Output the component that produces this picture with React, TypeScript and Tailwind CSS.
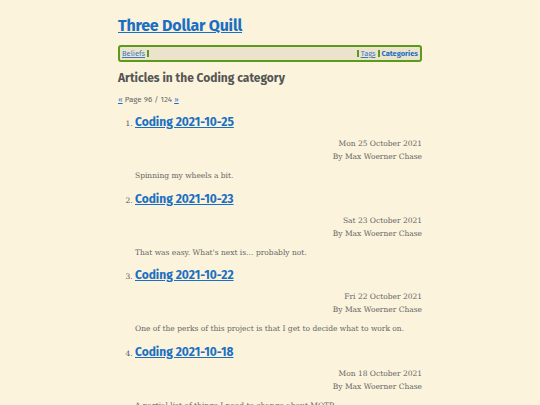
const articles = [
  { title: 'Coding 2021-10-25', date: 'Mon 25 October 2021', summary: 'Spinning my wheels a bit.' },
  { title: 'Coding 2021-10-23', date: 'Sat 23 October 2021', summary: "That was easy. What's next is… probably not." },
  { title: 'Coding 2021-10-22', date: 'Fri 22 October 2021', summary: 'One of the perks of this project is that I get to decide what to work on.' },
  { title: 'Coding 2021-10-18', date: 'Mon 18 October 2021', summary: 'A partial list of things I need to change about MOTR.' },
];

const sans = "font-['Fira_Sans','Noto_Sans','Open_Sans',sans-serif]";

export default function App() {
  return (
    <div className="h-[405px] overflow-hidden bg-[#fbf3dc] font-['DejaVu_Serif','Liberation_Serif',serif] text-[#555]">
      <div className="mx-auto w-[304px] pt-[13px]">
        <h1 className={`${sans} text-[16px] font-bold leading-[25px] tracking-[-0.2px]`}>
          <a href="#" className="text-[#1a6fc2] underline">Three Dollar Quill</a>
        </h1>

        <nav className={`${sans} mt-[7px] flex h-[17px] items-center rounded-[3px] border-2 border-[#5c9a1b] bg-[#ebe3cc] px-[2px] text-[7.5px] leading-none`}>
          <a href="#" className="border-r-2 border-[#5c9a1b] pr-[2px] text-[#3a7bbf] underline">Beliefs</a>
          <div className="flex-1" />
          <a href="#" className="border-x-2 border-[#5c9a1b] px-[2px] text-[#3a7bbf] underline">Tags</a>
          <a href="#" className="pl-[2px] font-bold text-[#1a6fc2]">Categories</a>
        </nav>

        <h2 className={`${sans} mt-[8px] text-[12px] font-bold leading-[16px] text-[#555]`}>
          Articles in the Coding category
        </h2>

        <p className={`${sans} mt-[9px] text-[8px] leading-[10px] text-[#666]`}>
          <a href="#" className="text-[#1a6fc2] underline">«</a> Page 96 / 124{' '}
          <a href="#" className="text-[#1a6fc2] underline">»</a>
        </p>

        <ol className="mt-[9px] list-decimal pl-[17px] marker:text-[7.5px]">
          {articles.map((a) => (
            <li key={a.title} className="h-[76.5px] text-[#555]">
              <h3 className={`${sans} text-[12px] font-bold leading-[16px]`}>
                <a href="#" className="text-[#1a6fc2] underline">{a.title}</a>
              </h3>
              <div className="mt-[7px] text-right text-[7.5px] leading-[13px] text-[#666]">
                <div>{a.date}</div>
                <div>By Max Woerner Chase</div>
              </div>
              <p className="mt-[7px] text-[7.5px] leading-[12px] text-[#666]">{a.summary}</p>
            </li>
          ))}
        </ol>
      </div>
    </div>
  );
}
